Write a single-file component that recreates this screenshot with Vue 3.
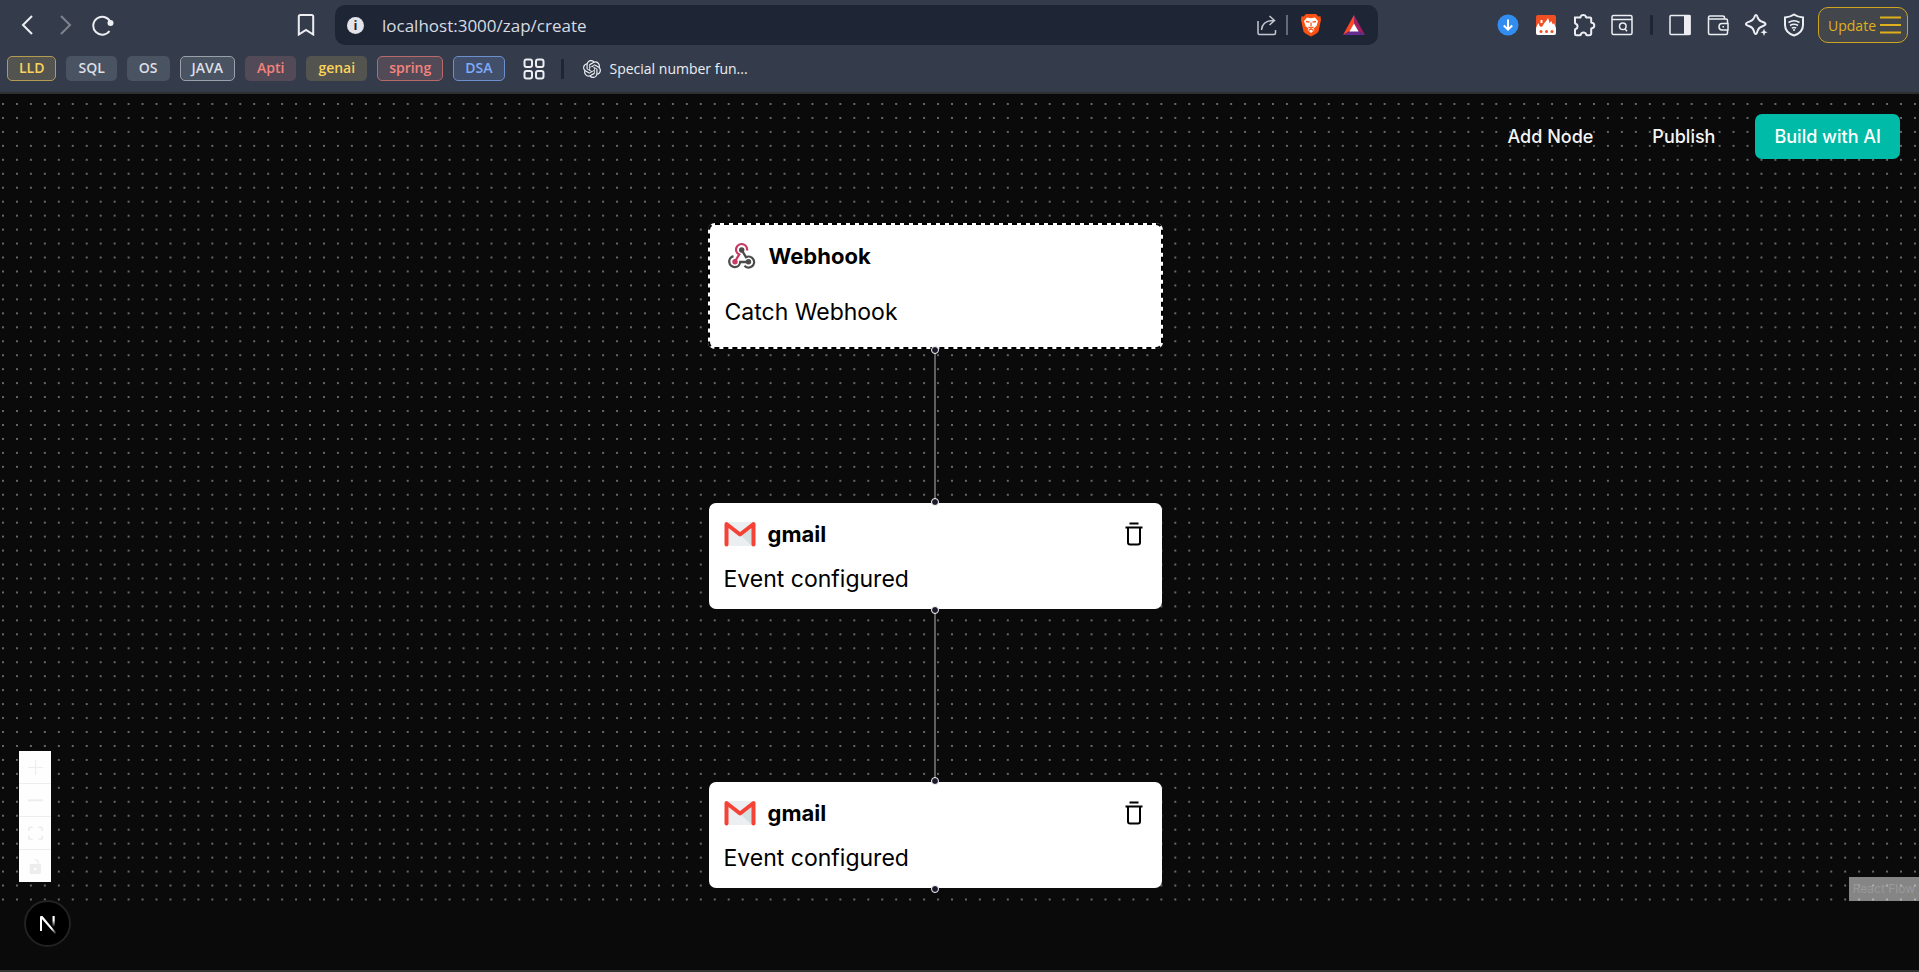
<script setup>
import { ref } from 'vue'

const zoom = 0.6978
const gap = 20 * zoom

const url = ref('localhost:3000/zap/create')

const bookmarks = [
  { name: 'LLD', tone: 'yellow', outlined: true },
  { name: 'SQL', tone: 'grey' },
  { name: 'OS', tone: 'grey' },
  { name: 'JAVA', tone: 'grey', outlined: true },
  { name: 'Apti', tone: 'red' },
  { name: 'genai', tone: 'yellow' },
  { name: 'spring', tone: 'red', outlined: true },
  { name: 'DSA', tone: 'blue', outlined: true },
]

const actions = [
  { id: 1, top: 409, label: 'gmail', text: 'Event configured' },
  { id: 2, top: 688, label: 'gmail', text: 'Event configured' },
]
</script>

<template>
  <div class="window">
    <header class="browser">
      <div class="toolbar">
        <div class="nav">
          <button class="tool" aria-label="Back">
            <svg width="22" height="22" viewBox="0 0 22 22"><path d="M16 2 7 11l9 9" class="line bold" /></svg>
          </button>
          <button class="tool dim" aria-label="Forward">
            <svg width="22" height="22" viewBox="0 0 22 22"><path d="m7 2 9 9-9 9" class="line bold" /></svg>
          </button>
          <button class="tool" aria-label="Reload">
            <svg width="22" height="22" viewBox="0 0 22 22"><path d="M18.200 7.500A9 9 0 1 0 17.500 17" class="line bold" /><circle cx="18.500" cy="9" r="3" fill="currentColor" /></svg>
          </button>
          <button class="tool mark" aria-label="Bookmark this page">
            <svg width="22" height="22" viewBox="0 0 22 22"><path d="M3.800 2.500q0-1.500 1.500-1.500h11.400q1.500 0 1.500 1.500v18l-7.200-4.500-7.200 4.500z" class="line bold" /></svg>
          </button>
        </div>

        <div class="address">
          <button class="info" aria-label="Site information">i</button>
          <input v-model="url" class="url" aria-label="Address" />
          <button class="tool" aria-label="Share">
            <svg width="22" height="22" viewBox="0 0 22 22"><path d="M2 7v12q0 1.500 1.500 1.500h14.500q1.500 0 1.500-1.500v-3M5.500 16C6 9.500 10 6.500 18 6.500M13.500 2l5 4.500-5 4.500" class="line" /></svg>
          </button>
          <span class="thin-rule"></span>
          <button class="tool" aria-label="Shields">
            <svg width="22" height="24" viewBox="0 0 22 24"><path d="M6 1h10l2.500 2.500 2-.2L21 7l-.5 2 -2 9.500Q17.500 20.500 11 23.500 4.500 20.500 3.500 18.500L1.500 9 1 7l.5-3.700 2 .2z" fill="#fb5012" /><path d="M7 4.500l4 .7 4-.7 3 3.500-1.500 5-3 2.500 1 1.500L11 20l-3.500-3 1-1.500-3-2.500L4 8z" fill="#fff" /><path d="m6 8.500 3.500.7M16 8.500l-3.500.7M11 9.500v4M8.500 14l2.500 1.200 2.500-1.200M8.500 17.300l2.500-1.300 2.500 1.300" stroke="#fb5012" stroke-width="1.300" fill="none" /></svg>
          </button>
          <button class="tool rewards" aria-label="Rewards">
            <svg width="24" height="22" viewBox="0 0 24 22"><path d="M12 1 1 21l7-4 4-7z" fill="#ff4724" /><path d="m12 1 11 20-7-4-4-7z" fill="#9e1f63" /><path d="M1 21h22l-7-4H8z" fill="#662d91" /><path d="m12 9.500 4.600 8H7.400z" fill="#fff" /></svg>
          </button>
        </div>

        <div class="extensions">
          <button class="tool" aria-label="Downloads">
            <svg width="22" height="22" viewBox="0 0 22 22"><circle cx="11" cy="11" r="10.500" fill="#318df0" /><path d="M11 5.500v10M6.800 11.500l4.200 4.200 4.200-4.200" stroke="#fff" stroke-width="2" fill="none" /></svg>
          </button>
          <button class="tool" aria-label="Burn extension">
            <svg width="22" height="22" viewBox="0 0 22 22"><rect x="1" y="1" width="20" height="20" rx="2" fill="#f04e23" /><path d="M1 14q1.500-3.500 2.500-5 .5 3 2.500 4 2-1 3-3.500Q11.500 7 13 4q1 2.500 1.500 5l1.800-2Q17 9 18 10.500l1-1.500q1 3 2 5v5q0 2-2 2H3q-2 0-2-2z" fill="#fff" /><path d="M6.500 6v3" stroke="#fff" stroke-width="2" /><circle cx="6" cy="17.500" r="1.500" fill="#f04e23" /><circle cx="11.500" cy="17.500" r="1.500" fill="#f04e23" /><circle cx="17" cy="17.500" r="1.500" fill="#f04e23" /></svg>
          </button>
          <button class="tool" aria-label="Extensions">
            <svg width="24" height="24" viewBox="0 0 24 24"><path d="M3 4.500h5.200q.5 0 .3-.8a3 3 0 0 1 5.500 0q-.2.800.4.800H18q1.200 0 1.200 1.200v3.600q0 .6.800.5a2.800 2.800 0 0 1 0 5.500q-.8-.1-.8.500v4.400q0 2-2 2h-2.400q-.6 0-.6-.7a2.800 2.800 0 0 0-5.400 0q0 .7-.6.700H4.500q-1.500 0-1.500-1.500v-4q0-.6.700-.7a2.800 2.800 0 0 0 0-5.300Q3 10.500 3 9.900z" class="line bold" /></svg>
          </button>
          <button class="tool" aria-label="Search tabs">
            <svg width="22" height="22" viewBox="0 0 22 22"><rect x="1" y="1.500" width="20" height="19" rx="1.500" class="line" /><path d="M1 5.500h20M14 15l2 2.200" class="line" /><circle cx="11.800" cy="12.300" r="3.300" class="line" /></svg>
          </button>
          <span class="rule"></span>
          <button class="tool" aria-label="Sidebar">
            <svg width="22" height="22" viewBox="0 0 22 22"><rect x="1" y="1.500" width="20" height="19" rx="1" class="line" /><path d="M15 1h6.500v20H15z" fill="currentColor" /></svg>
          </button>
          <button class="tool" aria-label="Wallet">
            <svg width="22" height="22" viewBox="0 0 22 22"><path d="M20.500 9V6.500q0-1.500-1.500-1.500H1.500M1.500 3v16q0 1.500 1.500 1.500h16q1.500 0 1.500-1.500v-2.500M1.500 5V3.500Q1.500 2 3 2h12.500q2 0 2 1.500V5M21 9.500h-6q-3 0-3 3.200t3 3.200h6zM15.500 12.700h1.500" class="line" /></svg>
          </button>
          <button class="tool" aria-label="Assistant">
            <svg width="24" height="24" viewBox="0 0 24 24"><path d="M12 2q1 0 1.500 2 1 3.500 4 4.500 4 1.200 4 2.500t-3 2.200Q14.500 14.500 13.500 18q-.7 3-1.800 3t-1.800-3q-1-3.500-4.500-4.700-3.500-1-3.500-2.300t3.500-2.400Q9 7.500 10.200 4.500 11 2 12 2z" class="line bold" /><path d="m20 15.500 1 2.800 2.600 1-2.600 1-1 2.700-1-2.700-2.600-1 2.600-1z" fill="currentColor" /></svg>
          </button>
          <button class="tool" aria-label="VPN">
            <svg width="22" height="24" viewBox="0 0 22 24"><path d="M11 1.500q4 2.700 9 3V12q0 7.500-9 10.500Q2 19.500 2 12V4.500q5-.3 9-3z" class="line bold" /><path d="M5.500 9.500q5.500-3.500 11 0M7 12.500q4-2.500 8 0M8.800 15.200q2.200-1.500 4.400 0" class="line" /><circle cx="11" cy="17" r="1" fill="currentColor" /></svg>
          </button>
          <button class="update">
            Update
            <svg width="21" height="18" viewBox="0 0 21 18"><path d="M0 1.500h21M0 9h21M0 16.500h21" stroke="currentColor" stroke-width="2" /></svg>
          </button>
        </div>
      </div>

      <nav class="bookmarks" aria-label="Bookmarks">
        <a v-for="b in bookmarks" :key="b.name" href="#" class="chip" :class="[b.tone, { outlined: b.outlined }]">{{ b.name }}</a>
        <button class="tool groups" aria-label="Tab groups">
          <svg width="22" height="22" viewBox="0 0 22 22"><rect x="1.500" y="1.500" width="7.500" height="7.500" rx="2" class="line bold" /><rect x="13" y="1.500" width="7.500" height="7.500" rx="2" class="line bold" /><rect x="1.500" y="13" width="7.500" height="7.500" rx="2" class="line bold" /><rect x="13" y="13" width="7.500" height="7.500" rx="2" class="line bold" /></svg>
        </button>
        <span class="rule"></span>
        <a href="#" class="page-link">
          <svg width="18" height="18" viewBox="0 0 24 24"><path fill="currentColor" d="M22.282 9.821a5.985 5.985 0 0 0-.516-4.910 6.046 6.046 0 0 0-6.510-2.900A6.065 6.065 0 0 0 4.981 4.180a5.985 5.985 0 0 0-3.998 2.900 6.046 6.046 0 0 0 .743 7.097 5.980 5.980 0 0 0 .510 4.911 6.051 6.051 0 0 0 6.515 2.900A5.985 5.985 0 0 0 13.260 24a6.056 6.056 0 0 0 5.772-4.206 5.990 5.990 0 0 0 3.998-2.900 6.056 6.056 0 0 0-.748-7.073zM13.260 22.430a4.476 4.476 0 0 1-2.876-1.041l.142-.080 4.778-2.758a.795.795 0 0 0 .393-.681v-6.737l2.020 1.169a.071.071 0 0 1 .038.052v5.583a4.504 4.504 0 0 1-4.495 4.494zM3.600 18.304a4.471 4.471 0 0 1-.535-3.014l.142.085 4.783 2.758a.771.771 0 0 0 .780 0l5.843-3.369v2.332a.080.080 0 0 1-.033.062L9.740 19.950a4.499 4.499 0 0 1-6.140-1.646zM2.341 7.896a4.485 4.485 0 0 1 2.365-1.973V11.600a.766.766 0 0 0 .388.677l5.814 3.354-2.020 1.169a.076.076 0 0 1-.071 0l-4.830-2.787A4.504 4.504 0 0 1 2.341 7.872zm16.596 3.856l-5.833-3.387L15.119 7.200a.076.076 0 0 1 .071 0l4.830 2.791a4.494 4.494 0 0 1-.676 8.105v-5.678a.790.790 0 0 0-.407-.667zm2.011-3.023l-.142-.085-4.774-2.782a.776.776 0 0 0-.785 0L9.409 9.230V6.897a.066.066 0 0 1 .028-.061l4.830-2.787a4.499 4.499 0 0 1 6.680 4.660zM8.306 12.863l-2.020-1.164a.080.080 0 0 1-.038-.057V6.075a4.499 4.499 0 0 1 7.375-3.453l-.142.080L8.704 5.459a.795.795 0 0 0-.393.681zm1.097-2.365l2.602-1.500 2.607 1.500v2.999l-2.597 1.500-2.607-1.500z" /></svg>
          Special number fun...
        </a>
      </nav>
    </header>

    <main class="canvas">
      <svg class="dots" aria-hidden="true">
        <defs>
          <pattern id="dot-grid" x="2" y="9" :width="gap" :height="gap" patternUnits="userSpaceOnUse">
            <circle cx="1" cy="1" r="0.900" fill="#92929a" />
          </pattern>
        </defs>
        <rect width="100%" height="100%" fill="url(#dot-grid)" />
      </svg>

      <svg class="edges" aria-hidden="true"><path d="M227 255v154M227 515v173" /></svg>

      <article class="node trigger">
        <svg class="outline" aria-hidden="true"><rect x="1" y="1" rx="6" /></svg>
        <div class="head">
          <svg class="logo" width="32" height="28" viewBox="0 0 32 28">
            <g fill="none" stroke-width="2.300">
              <path d="M8.500 14.200A5.500 5.500 0 1 0 15.200 20H23" stroke="#4b4b4b" />
              <path d="M10 19.500 14.200 12.500A5.500 5.500 0 1 1 22 8.500" stroke="#c73a63" />
              <path d="M16.700 8 21 15.200a5.500 5.500 0 1 1-1.500 8.600" stroke="#4b4b4b" />
            </g>
            <circle cx="16.700" cy="8" r="2.700" fill="#4b4b4b" />
            <circle cx="10" cy="19.700" r="2.700" fill="#c73a63" />
            <circle cx="23.500" cy="19.700" r="2.700" fill="#4b4b4b" />
          </svg>
          <h2>Webhook</h2>
        </div>
        <p>Catch Webhook</p>
        <i class="handle bottom"></i>
      </article>

      <article v-for="a in actions" :key="a.id" class="node action" :style="{ top: a.top + 'px' }">
        <i class="handle top"></i>
        <div class="head">
          <svg class="logo" width="32" height="26" viewBox="0 0 32 26">
            <path d="M3 1h26v24H3z" fill="#eceff1" />
            <path d="m16 13.500 13-9V25h-1z" fill="#d5e0e0" />
            <path d="M2.500 23.500V3l13.500 10.500L29.500 3v20.500" fill="none" stroke="#f44336" stroke-width="4" stroke-linejoin="round" stroke-linecap="round" />
          </svg>
          <h2>{{ a.label }}</h2>
          <button class="trash" aria-label="Delete node">
            <svg width="20" height="24" viewBox="0 0 20 24"><path d="M5.500 1.500h9M1.500 5.500h17M4 6v14.500q0 2 2 2h8q2 0 2-2V6" /></svg>
          </button>
        </div>
        <p>{{ a.text }}</p>
        <i class="handle bottom"></i>
      </article>

      <div class="menu">
        <button>Add Node</button>
        <button>Publish</button>
        <button class="primary">Build with AI</button>
      </div>

      <div class="controls">
        <button aria-label="Zoom in"><svg viewBox="0 0 32 32"><path d="M15 17.200H0v-2.400h14.800V0h2.400v14.800H32v2.400H17.200V32h-2.400V17.200z" /></svg></button>
        <button aria-label="Zoom out"><svg viewBox="0 0 32 32"><path d="M0 13.500h32v4.200H0z" /></svg></button>
        <button aria-label="Fit view"><svg viewBox="0 0 32 30"><path d="M3.692 4.630c0-.530.400-.938.939-.938h5.215V0H4.708C2.130 0 0 2.054 0 4.630v5.216h3.692V4.631zM27.354 0h-5.200v3.692h5.170c.530 0 .984.400.984.939v5.215H32V4.631A4.624 4.624 0 0 0 27.354 0zm.954 24.830c0 .532-.400.940-.939.940h-5.215v3.768h5.215c2.577 0 4.631-2.130 4.631-4.707v-5.139h-3.692v5.139zm-23.677.940a.919.919 0 0 1-.939-.940v-5.138H0v5.139c0 2.577 2.130 4.707 4.708 4.707h5.138V25.770H4.631z" /></svg></button>
        <button aria-label="Toggle interactivity"><svg viewBox="0 0 25 32"><path d="M21.333 10.667H19.810V7.619C19.810 3.429 16.380 0 12.190 0c-4.114 1.828-1.370 2.133.305 2.438 1.676.305 4.420 2.590 4.420 5.181v3.048H3.047A3.056 3.056 0 0 0 0 13.714v15.238A3.056 3.056 0 0 0 3.048 32h18.285a3.056 3.056 0 0 0 3.048-3.048V13.714a3.056 3.056 0 0 0-3.048-3.047zM12.190 24.533a3.056 3.056 0 0 1-3.047-3.047 3.056 3.056 0 0 1 3.047-3.048 3.056 3.056 0 0 1 3.048 3.048 3.056 3.056 0 0 1-3.048 3.047z" /></svg></button>
      </div>

      <a href="#" class="attribution">React Flow</a>
      <button class="devtools" aria-label="Open Next.js tools">
        <svg width="20" height="20" viewBox="0 0 20 20">
          <defs>
            <linearGradient id="fade-leg" x1="0" y1="0" x2="0" y2="1"><stop offset="0.400" stop-color="#fff" /><stop offset="1" stop-color="#fff" stop-opacity="0" /></linearGradient>
            <linearGradient id="fade-slash" x1="0" y1="0" x2="1" y2="1"><stop offset="0.700" stop-color="#fff" /><stop offset="1" stop-color="#fff" stop-opacity="0" /></linearGradient>
          </defs>
          <path d="M3 17V3" stroke="#fff" stroke-width="2" />
          <path d="M2 2h2.500l14 17-1.500 1L3 4z" fill="url(#fade-slash)" />
          <path d="M14.500 2h2.200v11h-2.200z" fill="url(#fade-leg)" />
        </svg>
      </button>
    </main>
  </div>
</template>

<style>
body {
  margin: 0;
  background: #0a0a0a;
}
</style>

<style scoped>
.window {
  min-height: 100vh;
  box-sizing: border-box;
  display: flex;
  flex-direction: column;
  border-bottom: 2px solid #353333;
  padding-bottom: 69px;
  background: #0a0a0a;
  font-family: Inter, "Liberation Sans", sans-serif;
}
button {
  padding: 0;
  border: 0;
  background: none;
  color: inherit;
  font: inherit;
  cursor: pointer;
}
a {
  text-decoration: none;
  color: inherit;
}
svg {
  display: block;
}
.browser {
  background: #343c4c;
  border-bottom: 2px solid #2e2f31;
  color: #eceef2;
  font-family: "Open Sans", "Noto Sans", sans-serif;
}
.toolbar {
  display: flex;
  align-items: center;
  height: 40px;
  padding: 5px 11px 0 8px;
}
.nav {
  display: flex;
  width: 327px;
}
.tool {
  display: flex;
  flex: none;
  align-items: center;
  justify-content: center;
  width: 38px;
  height: 38px;
}
.dim {
  opacity: 0.4;
}
.mark {
  margin-left: auto;
  margin-right: 10px;
}
.line {
  fill: none;
  stroke: currentColor;
  stroke-width: 1.5;
}
.bold {
  stroke-width: 2;
}
.address {
  display: flex;
  flex: 1;
  align-items: center;
  height: 40px;
  border-radius: 10px;
  background: #1e2636;
  color: #c3c7cf;
}
.info {
  width: 17px;
  height: 17px;
  margin: 0 18px 0 12px;
  border-radius: 50%;
  background: #e3e4ea;
  color: #1e2636;
  font-size: 13px;
  font-weight: 700;
  line-height: 17px;
}
.url {
  flex: 1;
  min-width: 0;
  padding: 0;
  border: 0;
  outline: 0;
  background: none;
  color: #d8dbe1;
  font: 17px "Open Sans", sans-serif;
}
.thin-rule {
  width: 2px;
  height: 20px;
  margin-right: 4px;
  background: #636a78;
}
.rewards {
  margin: 0 5px;
}
.extensions {
  display: flex;
  align-items: center;
  margin-left: 111px;
}
.rule {
  width: 3px;
  height: 20px;
  margin: 0 8px 0 9px;
  border-radius: 1px;
  background: #1e2636;
}
.update {
  display: flex;
  align-items: center;
  gap: 4px;
  height: 36px;
  margin-left: 5px;
  padding: 0 6px 0 9px;
  border: 1px solid #cfa41f;
  border-radius: 10px;
  background: #43464a;
  color: #e0b01c;
  font-size: 14px;
}
.bookmarks {
  display: flex;
  align-items: center;
  gap: 10px;
  height: 47px;
  padding: 0 7px;
  font-size: 14px;
}
.chip {
  box-sizing: border-box;
  height: 25px;
  padding: 0 11px;
  border: 1px solid transparent;
  border-radius: 5px;
  font-weight: 600;
  line-height: 22px;
}
.grey {
  background: #4a5362;
  color: #dcdfe5;
}
.yellow {
  background: #53544f;
  color: #fbd35c;
}
.red {
  background: #534a57;
  color: #f4837d;
}
.blue {
  background: #414f6b;
  color: #7fabf8;
}
.grey.outlined {
  border-color: #9aa0aa;
}
.yellow.outlined {
  border-color: #b39b51;
}
.red.outlined {
  border-color: #b86a6b;
}
.blue.outlined {
  border-color: #6c8fce;
}
.groups {
  height: 24px;
}
.bookmarks .rule {
  margin: 0 9px 0 -2px;
}
.page-link {
  display: flex;
  align-items: center;
  gap: 9px;
}
.canvas {
  position: relative;
  flex: 1;
  min-height: 807px;
}
.dots {
  position: absolute;
  inset: 0;
  width: 100%;
  height: 100%;
}
.edges {
  position: absolute;
  top: 0;
  left: calc(50% - 252px);
  width: 454px;
  height: 100%;
  fill: none;
  stroke: #b1b1b7;
  stroke-width: 1;
}
.node {
  position: absolute;
  box-sizing: border-box;
  border-radius: 7px;
  background: #fff;
  color: #000;
}
.trigger {
  top: 129px;
  left: calc(50% - 252px);
  width: 455px;
  height: 126px;
  padding: 18px 17px;
}
.action {
  left: calc(50% - 251px);
  width: 453px;
  height: 106px;
  padding: 16px 15px;
}
.outline {
  position: absolute;
  inset: 0;
  width: 100%;
  height: 100%;
}
.outline rect {
  width: calc(100% - 2px);
  height: calc(100% - 2px);
  fill: none;
  stroke: #000;
  stroke-width: 2;
  stroke-dasharray: 5 4;
}
.head {
  display: flex;
  align-items: center;
  height: 30px;
  gap: 12px;
}
h2 {
  margin: 0;
  font-size: 22px;
  font-weight: 700;
  line-height: 30px;
}
p {
  margin: 0;
  padding-top: 15px;
  font-size: 23px;
  line-height: 30px;
}
.trigger p {
  padding-top: 26px;
}
.trash {
  margin-left: auto;
  margin-right: 3px;
}
.trash svg {
  fill: none;
  stroke: #000;
  stroke-width: 2;
}
.handle {
  position: absolute;
  left: calc(50% - 4px);
  box-sizing: border-box;
  width: 8px;
  height: 8px;
  border: 1px solid #fff;
  border-radius: 50%;
  background: #1a192b;
}
.handle.top {
  top: -5px;
}
.handle.bottom {
  bottom: -5px;
}
.menu {
  position: absolute;
  top: 20px;
  right: 19px;
  display: flex;
  gap: 21px;
}
.menu button {
  height: 45px;
  padding: 0 19px;
  border-radius: 7px;
  color: #f5f5f5;
  font-size: 18px;
  font-weight: 500;
}
.menu .primary {
  background: #00bba7;
  color: #fff;
}
.controls {
  position: absolute;
  bottom: 19px;
  left: 19px;
  display: flex;
  flex-direction: column;
  width: 32px;
}
.controls button {
  display: flex;
  align-items: center;
  justify-content: center;
  height: 33px;
  border-bottom: 1px solid #eee;
  background: #fefefe;
}
.controls button:last-child {
  height: 32px;
  border-bottom: 0;
}
.controls svg {
  width: 15px;
  height: 15px;
  fill: #ededed;
}
.attribution {
  position: absolute;
  right: 0;
  bottom: 0;
  padding: 0 4px;
  background: rgba(255, 255, 255, 0.5);
  color: #999;
  font-size: 12px;
  line-height: 24px;
}
.devtools {
  position: absolute;
  bottom: -46px;
  left: 24px;
  display: flex;
  align-items: center;
  justify-content: center;
  box-sizing: border-box;
  width: 47px;
  height: 47px;
  border: 2px solid #222;
  border-radius: 50%;
  background: #000;
}
</style>
